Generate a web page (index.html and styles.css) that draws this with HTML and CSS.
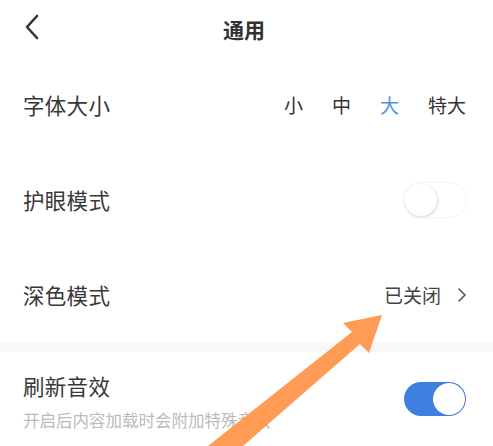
FILE: index.html
```html
<!DOCTYPE html>
<html lang="zh-CN">
<head>
    <meta charset="UTF-8">
    <meta name="viewport" content="width=device-width, initial-scale=1.0">
    <title>通用</title>
    <link rel="stylesheet" href="styles.css">
</head>
<body>
    <div class="page">
        <div class="header">
            <svg class="back" width="16" height="26" viewBox="0 0 16 26">
                <path d="M13 2 L3 13 L13 24" fill="none" stroke="#333" stroke-width="2.6" stroke-linecap="round" stroke-linejoin="round"/>
            </svg>
            <div class="title">通用</div>
        </div>

        <div class="row">
            <div class="label">字体大小</div>
            <div class="sizes">
                <span>小</span>
                <span>中</span>
                <span class="active">大</span>
                <span>特大</span>
            </div>
        </div>

        <div class="row">
            <div class="label">护眼模式</div>
            <div class="switch"><div class="knob"></div></div>
        </div>

        <div class="row">
            <div class="label">深色模式</div>
            <div class="value">
                已关闭
                <svg width="10" height="16" viewBox="0 0 10 16">
                    <path d="M2 2 L8 8 L2 14" fill="none" stroke="#555" stroke-width="1.6" stroke-linecap="round" stroke-linejoin="round"/>
                </svg>
            </div>
        </div>

        <div class="gap"></div>

        <div class="row tall">
            <div class="text">
                <div class="label">刷新音效</div>
                <div class="hint">开启后内容加载时会附加特殊音效</div>
            </div>
            <div class="switch on"><div class="knob"></div></div>
        </div>

        <!-- annotation arrow drawn over the screenshot -->
        <svg class="arrow" width="493" height="446" viewBox="0 0 493 446">
            <polygon points="208,446 352,332 343,323 382,315 369,353 360,344 243,446" fill="#ff9b54"/>
        </svg>
    </div>
</body>
</html>
```

FILE: styles.css
```css
body {
    margin: 0;
    background-color: #fff;
    font-family: "Noto Sans CJK SC", "Noto Sans", sans-serif;
    color: #333;
}
.page {
    position: relative;
    width: 493px;
    height: 446px;
    overflow: hidden;
}
.header {
    position: relative;
    height: 57px;
    display: flex;
    align-items: center;
    justify-content: center;
}
.back {
    position: absolute;
    left: 24px;
    top: 14px;
}
.title {
    font-size: 21px;
    font-weight: bold;
    color: #333;
    margin-left: -5px;
}
.row {
    height: 95px;
    padding: 0 27px 0 23px;
    display: flex;
    align-items: center;
    justify-content: space-between;
}
.label {
    font-size: 21.5px;
    color: #383838;
    letter-spacing: 0.3px;
}
.sizes {
    display: flex;
    gap: 29px;
    font-size: 19px;
    color: #333;
}
.sizes .active {
    color: #4a95e0;
}
.value {
    display: flex;
    align-items: center;
    gap: 16px;
    font-size: 19px;
    color: #444;
    margin-right: -1px;
}
.switch {
    position: relative;
    width: 62px;
    height: 34px;
    border-radius: 17px;
    background-color: #fff;
    box-shadow: 0 0 2px rgba(0,0,0,0.16);
}
.knob {
    position: absolute;
    left: 1px;
    top: 1px;
    width: 32px;
    height: 32px;
    border-radius: 50%;
    background-color: #fff;
    box-shadow: 1px 1px 3px rgba(0,0,0,0.16);
}
.switch.on {
    background-color: #3f7fe0;
    box-shadow: none;
}
.switch.on .knob {
    left: 29px;
    box-shadow: 0 0 1px rgba(0,0,0,0.3);
}
.gap {
    height: 10px;
    background-color: #f8f8f8;
}
.row.tall {
    height: 96px;
    align-items: flex-start;
    padding-top: 18px;
    box-sizing: border-box;
}
.row.tall .switch {
    margin-top: 12px;
}
.hint {
    margin-top: 7px;
    font-size: 16.5px;
    color: #bbb;
}
.arrow {
    position: absolute;
    left: 0;
    top: 0;
}
```
